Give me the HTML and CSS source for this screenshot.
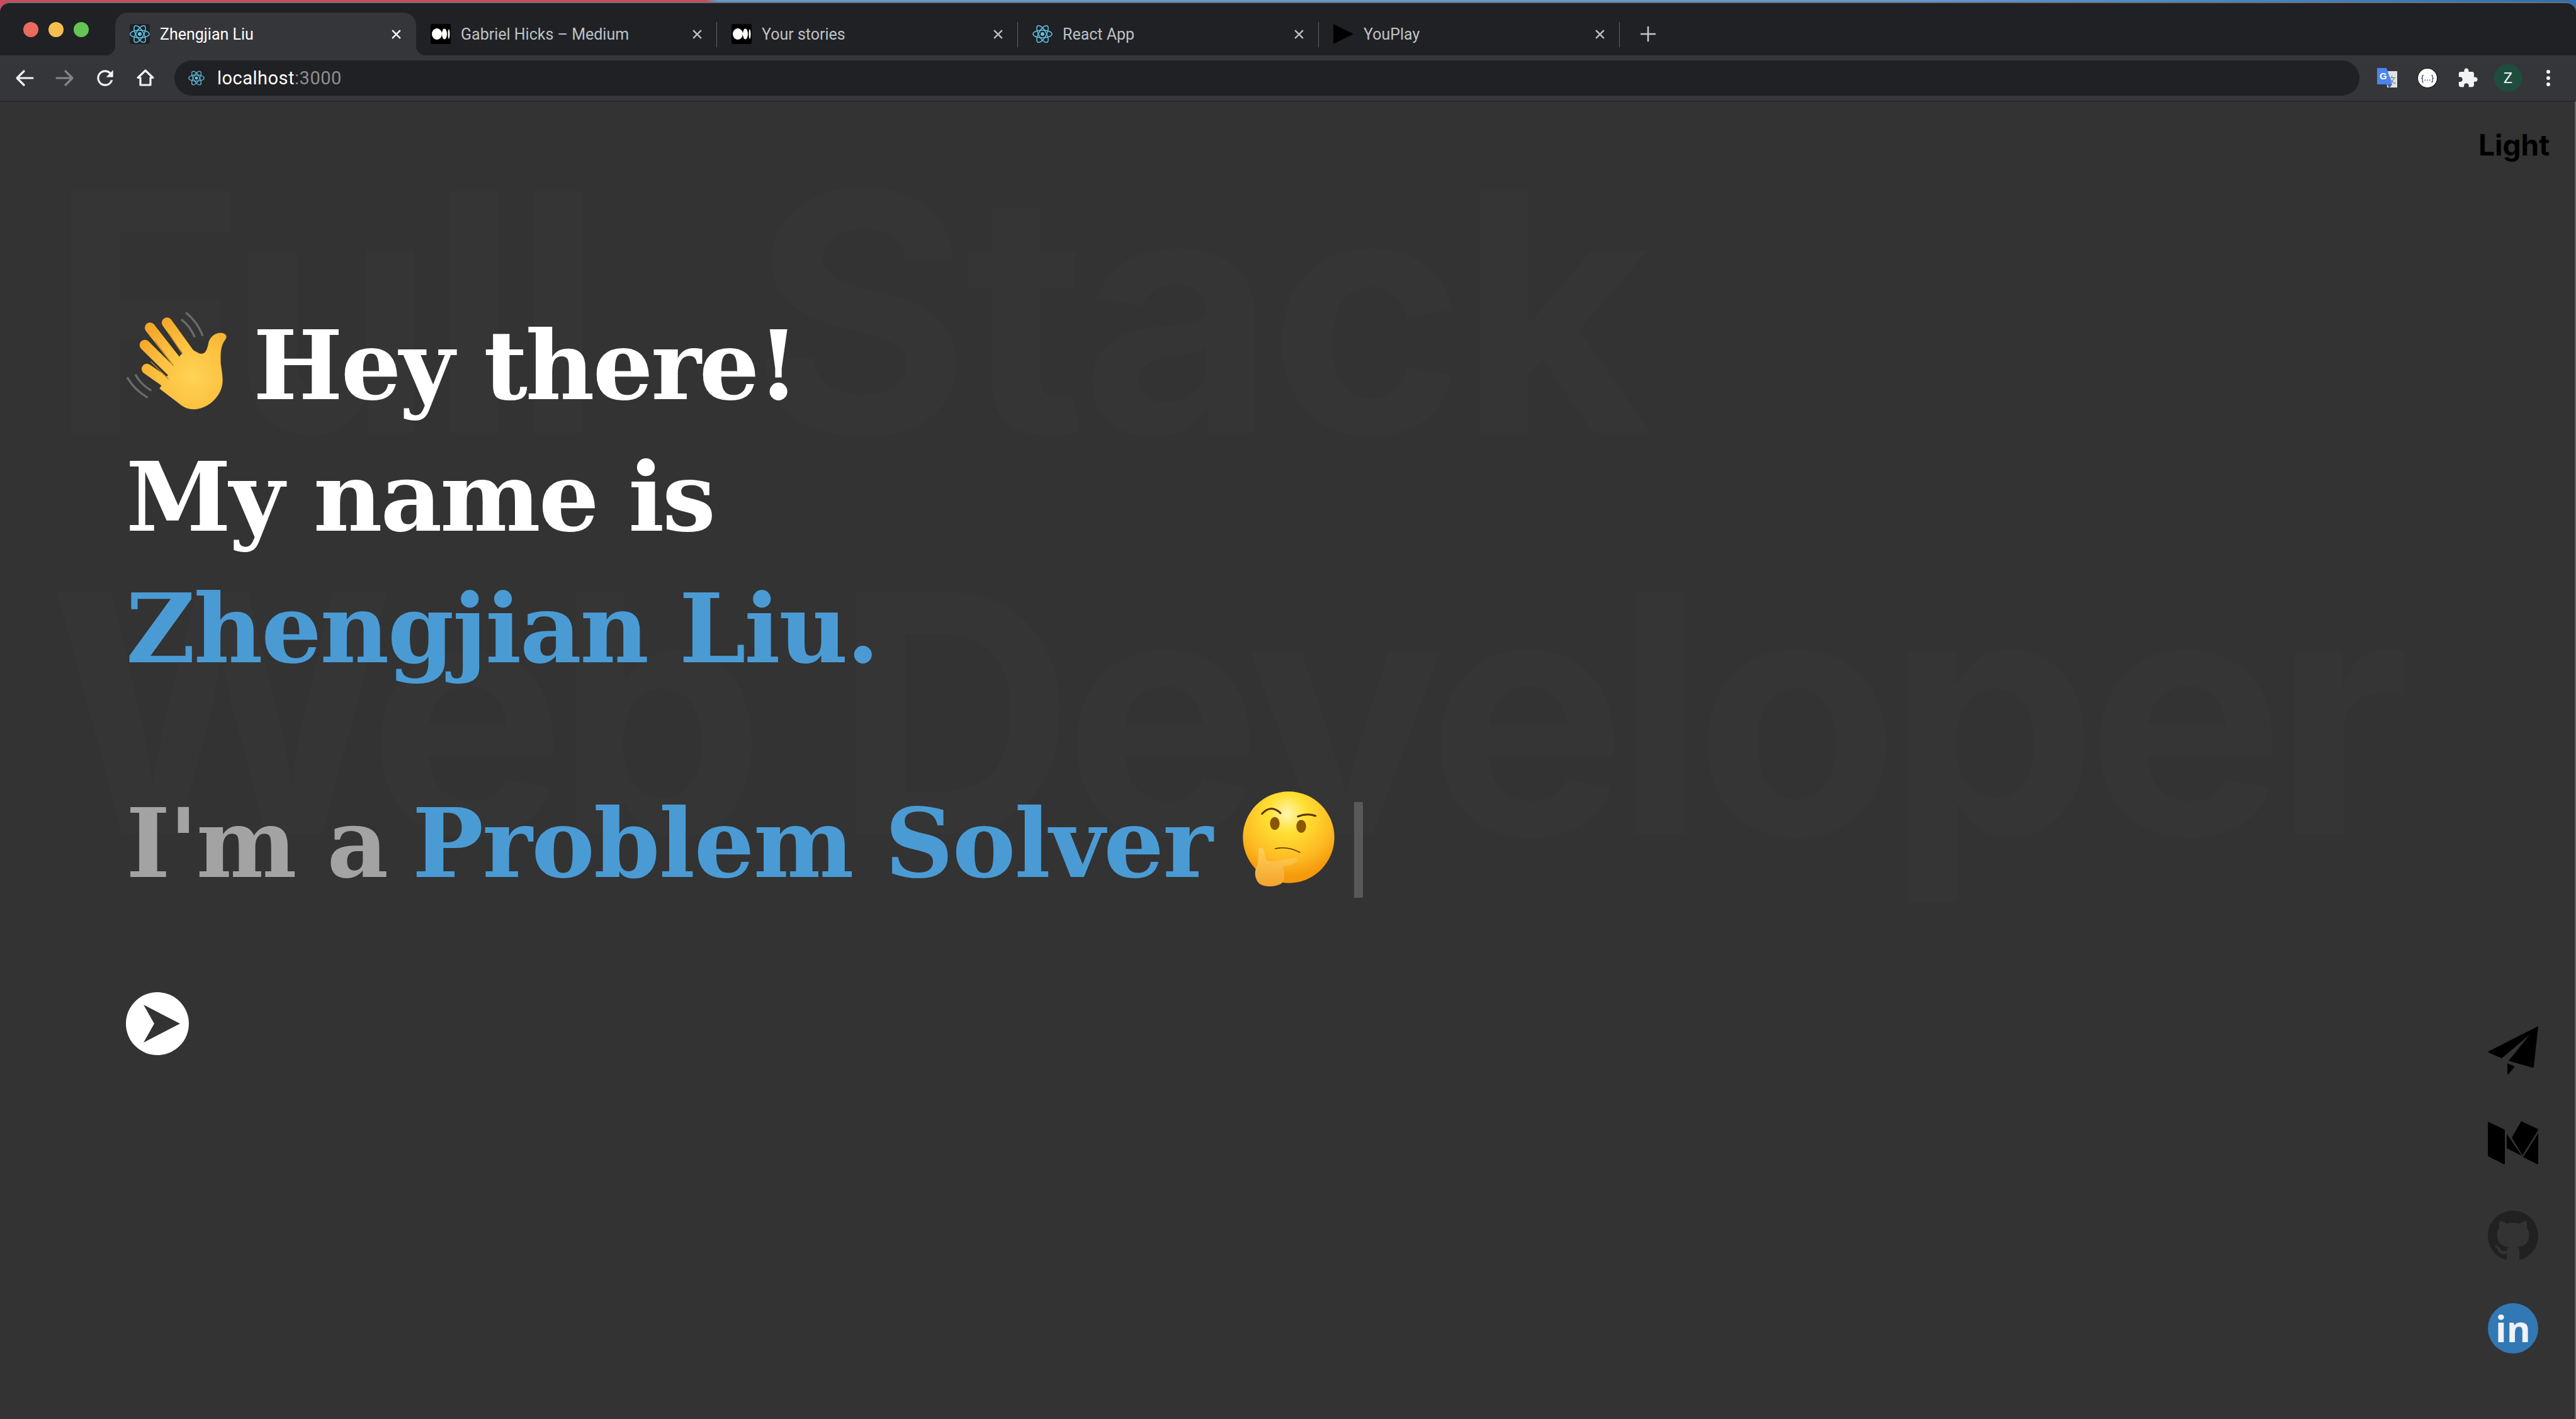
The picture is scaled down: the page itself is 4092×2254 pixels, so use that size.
FILE: index.html
```html
<!DOCTYPE html>
<html lang="en">
<head>
  <meta charset="UTF-8">
  <title>Zhengjian Liu</title>
  <link rel="stylesheet" href="styles.css">
</head>
<body>
  <svg class="sprites" width="0" height="0">
    <symbol id="react" viewBox="0 0 32 32">
      <g fill="none" stroke="#61c3e6" stroke-width="1.5">
        <ellipse cx="16" cy="16" rx="15" ry="6"/>
        <ellipse cx="16" cy="16" rx="15" ry="6" transform="rotate(60 16 16)"/>
        <ellipse cx="16" cy="16" rx="15" ry="6" transform="rotate(120 16 16)"/>
      </g>
      <circle cx="16" cy="16" r="3" fill="#61c3e6"/>
    </symbol>
    <symbol id="medium" viewBox="0 0 32 32">
      <rect width="32" height="32" rx="3" fill="#000"/>
      <ellipse cx="10" cy="16" rx="8" ry="9" fill="#fff"/>
      <ellipse cx="22" cy="16" rx="4" ry="8.5" fill="#fff"/>
      <ellipse cx="29" cy="16" rx="1.5" ry="7.5" fill="#fff"/>
    </symbol>
    <symbol id="close" viewBox="0 0 16 16">
      <path d="M2 2l12 12M14 2L2 14" fill="none" stroke="currentColor" stroke-width="2.2"/>
    </symbol>
  </svg>

  <div class="window">
    <header class="tabstrip">
      <div class="traffic">
        <span class="dot dot-red"></span>
        <span class="dot dot-yellow"></span>
        <span class="dot dot-green"></span>
      </div>
      <div class="tab tab-active">
        <svg class="favicon favicon-dark"><use href="#react"/></svg>
        <span class="tab-title">Zhengjian Liu</span>
        <svg class="tab-close"><use href="#close"/></svg>
      </div>
      <div class="tab tab-sep">
        <svg class="favicon"><use href="#medium"/></svg>
        <span class="tab-title">Gabriel Hicks – Medium</span>
        <svg class="tab-close"><use href="#close"/></svg>
      </div>
      <div class="tab tab-sep">
        <svg class="favicon"><use href="#medium"/></svg>
        <span class="tab-title">Your stories</span>
        <svg class="tab-close"><use href="#close"/></svg>
      </div>
      <div class="tab tab-sep">
        <svg class="favicon"><use href="#react"/></svg>
        <span class="tab-title">React App</span>
        <svg class="tab-close"><use href="#close"/></svg>
      </div>
      <div class="tab tab-sep">
        <svg class="favicon" viewBox="0 0 32 32"><path d="M0 0L32 16L0 32Z" fill="#000"/></svg>
        <span class="tab-title">YouPlay</span>
        <svg class="tab-close"><use href="#close"/></svg>
      </div>
      <svg class="new-tab" viewBox="0 0 24 24"><path d="M12 0v24M0 12h24" fill="none" stroke="#c4c7ca" stroke-width="2.6"/></svg>
    </header>

    <nav class="toolbar">
      <div class="tool">
        <svg class="tool-icon" viewBox="0 0 32 32"><path d="M29 16H5M15 5L4 16l11 11" fill="none" stroke="#f1f3f4" stroke-width="3.2" stroke-linecap="round" stroke-linejoin="round"/></svg>
      </div>
      <div class="tool">
        <svg class="tool-icon" viewBox="0 0 32 32"><path d="M3 16h24M17 5l11 11-11 11" fill="none" stroke="#858688" stroke-width="3.2" stroke-linecap="round" stroke-linejoin="round"/></svg>
      </div>
      <div class="tool">
        <svg class="tool-icon-reload" viewBox="0 0 24 24"><path fill="#f1f3f4" d="M17.65 6.35A7.958 7.958 0 0 0 12 4c-4.42 0-7.99 3.58-7.99 8s3.57 8 7.99 8c3.73 0 6.84-2.55 7.73-6h-2.08A5.99 5.99 0 0 1 12 18c-3.31 0-6-2.69-6-6s2.69-6 6-6c1.66 0 3.14.69 4.22 1.78L13 11h7V4l-2.35 2.35z"/></svg>
      </div>
      <div class="tool">
        <svg class="tool-icon" viewBox="0 0 32 32"><path d="M16 4L4 15.5h4V27h16V15.5h4z" fill="none" stroke="#f1f3f4" stroke-width="3.2" stroke-linejoin="round"/></svg>
      </div>

      <div class="address">
        <svg class="address-icon"><use href="#react"/></svg>
        <span class="host">localhost<span class="port">:3000</span></span>
      </div>

      <div class="tool">
        <svg class="ext-translate" viewBox="0 0 32 32">
          <path d="M14 5h18v26H16z" fill="#dfe1e3"/>
          <text class="ext-wen" x="17" y="23">文</text>
          <path d="M0 0h15l9 26H0z" fill="#4b84ec"/>
          <path d="M16 26l8 0-4.5 6z" fill="#3a5fbd"/>
          <text class="ext-g" x="4" y="18">G</text>
        </svg>
      </div>
      <div class="tool">
        <span class="ext-json">{…}</span>
      </div>
      <div class="tool">
        <svg class="ext-puzzle" viewBox="0 0 24 24"><path fill="#f1f3f4" d="M20.5 11H19V7c0-1.1-.9-2-2-2h-4V3.5C13 2.12 11.88 1 10.5 1S8 2.12 8 3.5V5H4c-1.1 0-1.99.9-1.99 2v3.8H3.5c1.49 0 2.7 1.21 2.7 2.7s-1.21 2.7-2.7 2.7H2V20c0 1.1.9 2 2 2h3.8v-1.5c0-1.49 1.21-2.7 2.7-2.7 1.49 0 2.7 1.21 2.7 2.7V22H17c1.1 0 2-.9 2-2v-4h1.5c1.38 0 2.5-1.12 2.5-2.5S21.88 11 20.5 11z"/></svg>
      </div>
      <div class="tool">
        <span class="avatar">Z</span>
      </div>
      <div class="tool menu">
        <span class="menu-dot"></span>
        <span class="menu-dot"></span>
        <span class="menu-dot"></span>
      </div>
    </nav>

    <main class="page">
      <div class="backdrop">
        <div class="backdrop-word backdrop-first">Full Stack</div>
        <div class="backdrop-word backdrop-second">Web Developer</div>
      </div>

      <button class="theme-toggle" type="button">Light</button>

      <section class="hero">
        <h1 class="intro">
          <span class="line line-tight">
            <svg class="emoji-wave" viewBox="0 0 540 540">
              <defs>
                <radialGradient id="palm" gradientUnits="userSpaceOnUse" cx="350" cy="340" r="300">
                  <stop offset="0" stop-color="#ffd255"/>
                  <stop offset=".55" stop-color="#fcc13f"/>
                  <stop offset="1" stop-color="#f4a72a"/>
                </radialGradient>
              </defs>
              <g fill="none" stroke="#6a6a6a" stroke-width="10">
                <path d="M316 38Q370 80 396 149"/>
                <path d="M294 70Q335 100 358 155"/>
                <path d="M36 346Q70 405 134 443"/>
                <path d="M75 332Q100 380 151 409"/>
              </g>
              <g stroke="url(#palm)" stroke-width="50" stroke-linecap="round">
                <path d="M226 86L330 230"/>
                <path d="M145 110L270 270"/>
                <path d="M120 192L250 320"/>
                <path d="M130 306L250 390"/>
              </g>
              <path fill="url(#palm)" d="M378 232C408 242 416 215 422 190C428 150 460 130 490 135C512 140 514 155 500 172C484 196 480 222 482 280C490 340 502 380 470 430C430 492 350 520 295 480L190 400L290 240L330 205Z"/>
              <g fill="none" stroke="#c9801c" stroke-width="4" stroke-linecap="round">
                <path d="M236 140L298 234"/>
                <path d="M168 172L256 290"/>
                <path d="M150 272L232 354"/>
              </g>
            </svg>Hey there!
          </span>
          <span class="line line-tight">My name is</span>
          <span class="line accent">Zhengjian Liu.</span>
        </h1>

        <h2 class="typed">
          <span class="typed-lead">I'm a</span> <span class="accent typed-word">Problem Solver</span><svg class="emoji-think" viewBox="0 0 585 570">
            <defs>
              <radialGradient id="face" gradientUnits="userSpaceOnUse" cx="265" cy="130" r="300">
                <stop offset="0" stop-color="#fff6b0"/>
                <stop offset=".3" stop-color="#ffe033"/>
                <stop offset=".75" stop-color="#fdb922"/>
                <stop offset="1" stop-color="#f59a0c"/>
              </radialGradient>
              <linearGradient id="fist" x1="0" y1="0" x2="0" y2="1">
                <stop offset="0" stop-color="#ffd05a"/>
                <stop offset="1" stop-color="#f4a42c"/>
              </linearGradient>
            </defs>
            <circle cx="273" cy="243" r="218" fill="url(#face)"/>
            <g fill="none" stroke="#5c3300" stroke-linecap="round">
              <path d="M146 131Q190 84 234 128" stroke-width="9"/>
              <path d="M317 144Q360 126 401 141" stroke-width="9"/>
              <path d="M209 297Q270 284 326 315" stroke-width="5"/>
            </g>
            <ellipse cx="207" cy="177" rx="23" ry="31" fill="#8a5600"/>
            <ellipse cx="333" cy="191" rx="23" ry="31" fill="#8a5600"/>
            <path fill="url(#fist)" d="M130 300C138 285 155 295 157 315C160 335 165 352 175 357C220 358 265 345 300 342C322 342 320 358 300 366C280 375 262 380 245 385C256 405 255 450 240 462C215 480 160 482 135 465C112 445 108 410 120 385C130 365 128 330 130 300Z"/>
          </svg><span class="cursor"></span>
        </h2>

        <button class="next" type="button" aria-label="Next">
          <svg class="next-icon" viewBox="0 0 100 100">
            <circle cx="50" cy="50" r="50" fill="#fff"/>
            <path d="M28 20L86 50L28 80L45 50Z" fill="#333"/>
          </svg>
        </button>
      </section>

      <aside class="social">
        <a class="social-link">
          <svg class="social-icon" viewBox="0 0 80 77"><path d="M80 0L1 40Q0 41 1 42L22 51L66 14L33 55L71 66Q73 66 73 64ZM31 59L43 64L33 76Q31 78 31 75Z" fill="#000"/></svg>
        </a>
        <a class="social-link">
          <svg class="social-icon" viewBox="0 0 80 69"><path d="M1 1L26 13Q27 14 27 15V66Q27 69 25 68L1 56Q0 55 0 54V3Q0 0 1 1ZM30 20L54 55L30 43ZM53 0L79 12L80 14L55 54L38 26ZM80 19V66Q80 69 78 68L56 57Z" fill="#000"/></svg>
        </a>
        <a class="social-link">
          <svg class="social-icon" viewBox="0 0 16 16"><path fill="#212121" d="M8 0C3.58 0 0 3.58 0 8c0 3.54 2.29 6.53 5.47 7.59.4.07.55-.17.55-.38 0-.19-.01-.82-.01-1.49-2.01.37-2.53-.49-2.69-.94-.09-.23-.48-.94-.82-1.13-.28-.15-.68-.52-.01-.53.63-.01 1.08.58 1.23.82.72 1.21 1.87.87 2.33.66.07-.52.28-.87.51-1.07-1.78-.2-3.64-.89-3.64-3.95 0-.87.31-1.59.82-2.15-.08-.2-.36-1.02.08-2.12 0 0 .67-.21 2.2.82.64-.18 1.32-.27 2-.27s1.36.09 2 .27c1.53-1.04 2.2-.82 2.2-.82.44 1.1.16 1.92.08 2.12.51.56.82 1.27.82 2.15 0 3.07-1.87 3.75-3.65 3.95.29.25.54.73.54 1.48 0 1.07-.01 1.93-.01 2.2 0 .21.15.46.55.38A8.01 8.01 0 0 0 16 8c0-4.42-3.58-8-8-8z"/></svg>
        </a>
        <a class="social-link">
          <span class="linkedin">in</span>
        </a>
      </aside>
    </main>
  </div>
</body>
</html>
```

FILE: styles.css
```css
* {
  box-sizing: border-box;
}

html,
body {
  margin: 0;
  padding: 0;
  height: 100%;
}

body {
  background: linear-gradient(90deg, #cc4a5c 0, #cc4a5c 1120px, #5f9dd1 1140px, #5f9dd1 3000px, #2f6fb2 100%);
  padding-top: 3px;
  font-family: Roboto, "Liberation Sans", sans-serif;
  overflow: hidden;
}

.sprites {
  position: absolute;
}

.window {
  height: 2251px;
  display: flex;
  flex-direction: column;
  background-color: #202124;
  border-top: 2px solid #6e6f71;
  border-radius: 16px 16px 0 0;
  overflow: hidden;
}

/* tabs */

.tabstrip {
  height: 83px;
  flex: none;
  display: flex;
  align-items: flex-end;
}

.traffic {
  width: 183px;
  height: 83px;
  padding-left: 37px;
  display: flex;
  align-items: center;
  gap: 16px;
}

.dot {
  width: 24px;
  height: 24px;
  border-radius: 50%;
}

.dot-red {
  background-color: #ed6a5e;
}

.dot-yellow {
  background-color: #f5bf4f;
}

.dot-green {
  background-color: #62c554;
}

.tab {
  position: relative;
  width: 478px;
  height: 68px;
  padding: 0 23px;
  display: flex;
  align-items: center;
  gap: 16px;
  color: #bdc1c6;
  font-size: 25px;
}

.tab-active {
  background-color: #35363a;
  border-radius: 20px 20px 0 0;
  color: #fff;
}

.tab-active::before,
.tab-active::after {
  content: "";
  position: absolute;
  bottom: 0;
  width: 16px;
  height: 16px;
}

.tab-active::before {
  left: -16px;
  background: radial-gradient(circle at 0 0, transparent 16px, #35363a 16.5px);
}

.tab-active::after {
  right: -16px;
  background: radial-gradient(circle at 100% 0, transparent 16px, #35363a 16.5px);
}

.tab-sep::after {
  content: "";
  position: absolute;
  right: 0;
  top: 15px;
  height: 40px;
  width: 1px;
  background-color: #5f6165;
}

.favicon {
  width: 32px;
  height: 32px;
  flex: none;
}

.favicon-dark {
  background-color: #202124;
  border-radius: 4px;
}

.tab-title {
  flex: 1;
  white-space: nowrap;
}

.tab-close {
  width: 17px;
  height: 17px;
  flex: none;
}

.new-tab {
  width: 24px;
  height: 24px;
  margin: 0 0 22px 33px;
}

/* toolbar */

.toolbar {
  height: 72px;
  flex: none;
  display: flex;
  align-items: center;
  padding: 0 12px 0 7px;
  background-color: #35363a;
}

.tool {
  width: 64px;
  height: 64px;
  flex: none;
  display: flex;
  align-items: center;
  justify-content: center;
}

.tool-icon {
  width: 32px;
  height: 32px;
}

.tool-icon-reload {
  width: 38px;
  height: 38px;
}

.address {
  flex: 1;
  height: 56px;
  margin: 0 12px 0 14px;
  padding-left: 22px;
  display: flex;
  align-items: center;
  gap: 20px;
  background-color: #202124;
  border-radius: 28px;
}

.address-icon {
  width: 26px;
  height: 26px;
}

.host {
  color: #fff;
  font-size: 29px;
  letter-spacing: .5px;
}

.port {
  color: #8b8d91;
}

.ext-translate {
  width: 32px;
  height: 32px;
}

.ext-wen {
  font-family: "Noto Sans CJK SC", sans-serif;
  font-size: 13px;
  fill: #6f7f88;
}

.ext-g {
  font-family: "Liberation Sans", sans-serif;
  font-size: 15px;
  font-weight: 700;
  fill: #fff;
}

.ext-json {
  width: 30px;
  height: 30px;
  display: flex;
  align-items: center;
  justify-content: center;
  background-color: #fff;
  border-radius: 50%;
  box-shadow: 0 0 0 1px #111;
  color: #111;
  font-family: "Liberation Sans", sans-serif;
  font-size: 12px;
}

.ext-puzzle {
  width: 34px;
  height: 34px;
}

.avatar {
  width: 44px;
  height: 44px;
  display: flex;
  align-items: center;
  justify-content: center;
  background-color: #1e4d3f;
  border-radius: 50%;
  color: #f1f3f4;
  font-size: 24px;
}

.menu {
  flex-direction: column;
  gap: 4px;
}

.menu-dot {
  width: 6px;
  height: 6px;
  background-color: #f1f3f4;
  border-radius: 50%;
}

/* page */

.page {
  position: relative;
  flex: 1;
  background-color: #333;
  border-top: 2px solid #2a2a2b;
  border-right: 2px solid #666;
  overflow: hidden;
}

.backdrop {
  position: absolute;
  top: 15px;
  left: 78px;
  color: #353535;
  font-family: Inter, "Liberation Sans", sans-serif;
  font-size: 530px;
  font-weight: 700;
  line-height: 637px;
  white-space: nowrap;
}

.backdrop-first {
  letter-spacing: -10px;
  word-spacing: 130px;
}

.backdrop-second {
  letter-spacing: -18px;
  word-spacing: 20px;
}

.theme-toggle {
  position: absolute;
  top: 45px;
  right: 40px;
  padding: 0;
  background: none;
  border: 0;
  color: #000;
  font-family: Inter, "Liberation Sans", sans-serif;
  font-size: 46px;
  font-weight: 700;
  line-height: 46px;
}

.hero {
  position: relative;
  padding: 315px 0 0 200px;
  font-family: "DejaVu Serif", serif;
}

.intro,
.typed {
  margin: 0;
  font-size: 151px;
  font-weight: 700;
  line-height: 209px;
  letter-spacing: -2.5px;
  white-space: nowrap;
}

.intro {
  color: #fff;
}

.line {
  display: block;
}

.line-tight {
  letter-spacing: -3.2px;
}

.accent {
  color: #4a9bd4;
}

.typed {
  margin-top: 132px;
}

.typed-lead {
  color: #a3a3a3;
}

.typed-word {
  margin-left: -10px;
  letter-spacing: -1.8px;
}

.emoji-wave {
  width: 180px;
  height: 180px;
  margin: 0 32px 0 -10px;
  vertical-align: -30px;
}

.emoji-think {
  width: 195px;
  height: 190px;
  margin-left: 31px;
  vertical-align: -46px;
}

.cursor {
  display: inline-block;
  width: 14px;
  height: 152px;
  background-color: #595959;
  vertical-align: -33px;
}

.next {
  display: block;
  margin-top: 131px;
  padding: 0;
  background: none;
  border: 0;
}

.next-icon {
  display: block;
  width: 100px;
  height: 100px;
}

.social {
  position: absolute;
  right: 58px;
  bottom: 71px;
  display: flex;
  flex-direction: column;
}

.social-link {
  width: 80px;
  height: 147px;
  display: flex;
  align-items: center;
}

.social-icon {
  width: 80px;
  display: block;
}

.linkedin {
  width: 80px;
  height: 80px;
  display: flex;
  align-items: center;
  justify-content: center;
  background-color: #3178b5;
  border-radius: 50%;
  color: #f0f2f5;
  font-family: "Open Sans", sans-serif;
  font-size: 58px;
  font-weight: 700;
  line-height: 1;
}
```
